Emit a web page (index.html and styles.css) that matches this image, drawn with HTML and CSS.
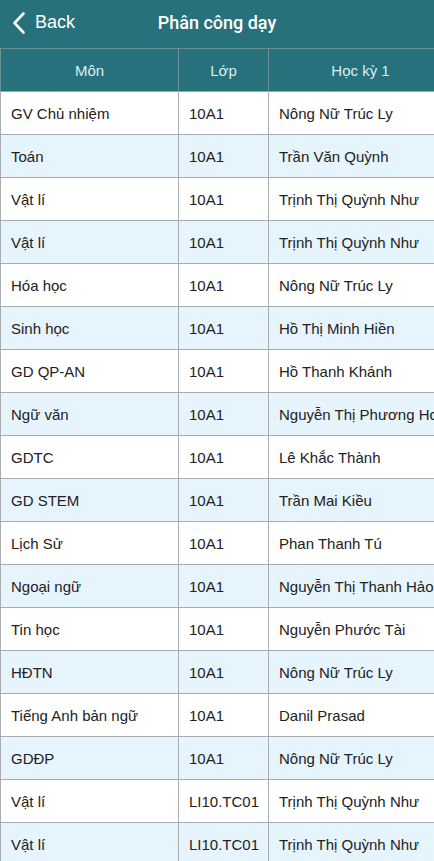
FILE: index.html
```html
<!DOCTYPE html>
<html lang="vi">
<head>
<meta charset="utf-8">
<link rel="stylesheet" href="styles.css">
</head>
<body>
<div class="screen">
  <header class="nav">
    <div class="back">
      <svg class="chev" width="14" height="24" viewBox="0 0 14 24"><path d="M11.5 2.5 L2.5 12 L11.5 21.5" fill="none" stroke="#fff" stroke-width="2.6" stroke-linecap="round" stroke-linejoin="round"/></svg>
      <span>Back</span>
    </div>
    <div class="title">Phân công dạy</div>
  </header>
  <div class="table-wrap">
    <table class="grid">
      <colgroup><col class="c1"><col class="c2"><col class="c3"></colgroup>
      <thead>
        <tr><th>Môn</th><th>Lớp</th><th>Học kỳ 1</th></tr>
      </thead>
      <tbody>
        <tr><td>GV Chủ nhiệm</td><td>10A1</td><td>Nông Nữ Trúc Ly</td></tr>
        <tr class="alt"><td>Toán</td><td>10A1</td><td>Trần Văn Quỳnh</td></tr>
        <tr><td>Vật lí</td><td>10A1</td><td>Trịnh Thị Quỳnh Như</td></tr>
        <tr class="alt"><td>Vật lí</td><td>10A1</td><td>Trịnh Thị Quỳnh Như</td></tr>
        <tr><td>Hóa học</td><td>10A1</td><td>Nông Nữ Trúc Ly</td></tr>
        <tr class="alt"><td>Sinh học</td><td>10A1</td><td>Hồ Thị Minh Hiền</td></tr>
        <tr><td>GD QP-AN</td><td>10A1</td><td>Hồ Thanh Khánh</td></tr>
        <tr class="alt"><td>Ngữ văn</td><td>10A1</td><td>Nguyễn Thị Phương Hoa</td></tr>
        <tr><td>GDTC</td><td>10A1</td><td>Lê Khắc Thành</td></tr>
        <tr class="alt"><td>GD STEM</td><td>10A1</td><td>Trần Mai Kiều</td></tr>
        <tr><td>Lịch Sử</td><td>10A1</td><td>Phan Thanh Tú</td></tr>
        <tr class="alt"><td>Ngoại ngữ</td><td>10A1</td><td>Nguyễn Thị Thanh Hảo</td></tr>
        <tr><td>Tin học</td><td>10A1</td><td>Nguyễn Phước Tài</td></tr>
        <tr class="alt"><td>HĐTN</td><td>10A1</td><td>Nông Nữ Trúc Ly</td></tr>
        <tr><td>Tiếng Anh bản ngữ</td><td>10A1</td><td>Danil Prasad</td></tr>
        <tr class="alt"><td>GDĐP</td><td>10A1</td><td>Nông Nữ Trúc Ly</td></tr>
        <tr><td>Vật lí</td><td>LI10.TC01</td><td>Trịnh Thị Quỳnh Như</td></tr>
        <tr class="alt"><td>Vật lí</td><td>LI10.TC01</td><td>Trịnh Thị Quỳnh Như</td></tr>
      </tbody>
    </table>
  </div>
</div>
</body>
</html>
```
FILE: styles.css
```css
html, body {
  margin: 0;
  padding: 0;
  background: #ffffff;
}
body {
  font-family: "Liberation Sans", Arial, sans-serif;
  overflow: hidden;
  width: 434px;
  height: 861px;
}
.screen {
  width: 434px;
  height: 861px;
  overflow: hidden;
}
.nav {
  height: 48px;
  background: #26717b;
  display: flex;
  align-items: center;
  position: relative;
  color: #fff;
}
.back {
  display: flex;
  align-items: center;
  gap: 9px;
  padding-left: 12px;
  font-size: 18px;
  height: 100%;
  padding-bottom: 3px;
  box-sizing: border-box;
}
.chev { display: block; }
.title {
  position: absolute;
  left: 0;
  right: 0;
  top: 0;
  height: 45px;
  line-height: 45px;
  text-align: center;
  font-family: Roboto, "Liberation Sans", sans-serif;
  font-size: 18px;
  font-weight: 500;
  pointer-events: none;
}
.table-wrap {
  width: 434px;
  overflow: hidden;
}
.grid {
  border-collapse: collapse;
  table-layout: fixed;
  width: 452px;
  font-size: 15px;
}
.c1 { width: 178px; }
.c2 { width: 90px; }
.c3 { width: 184px; }
.grid th {
  background: #26717b;
  color: #dcefef;
  font-weight: normal;
  height: 42px;
  padding: 0;
  text-align: center;
  border: 1px solid #6c8f94;
  border-bottom-color: #9aa7a9;
}
.grid td {
  height: 42px;
  padding: 0 0 0 10px;
  border: 1px solid #a9adaf;
  color: #222;
  white-space: nowrap;
  overflow: hidden;
}
.grid tr.alt td {
  background: #e6f4fd;
}
```
